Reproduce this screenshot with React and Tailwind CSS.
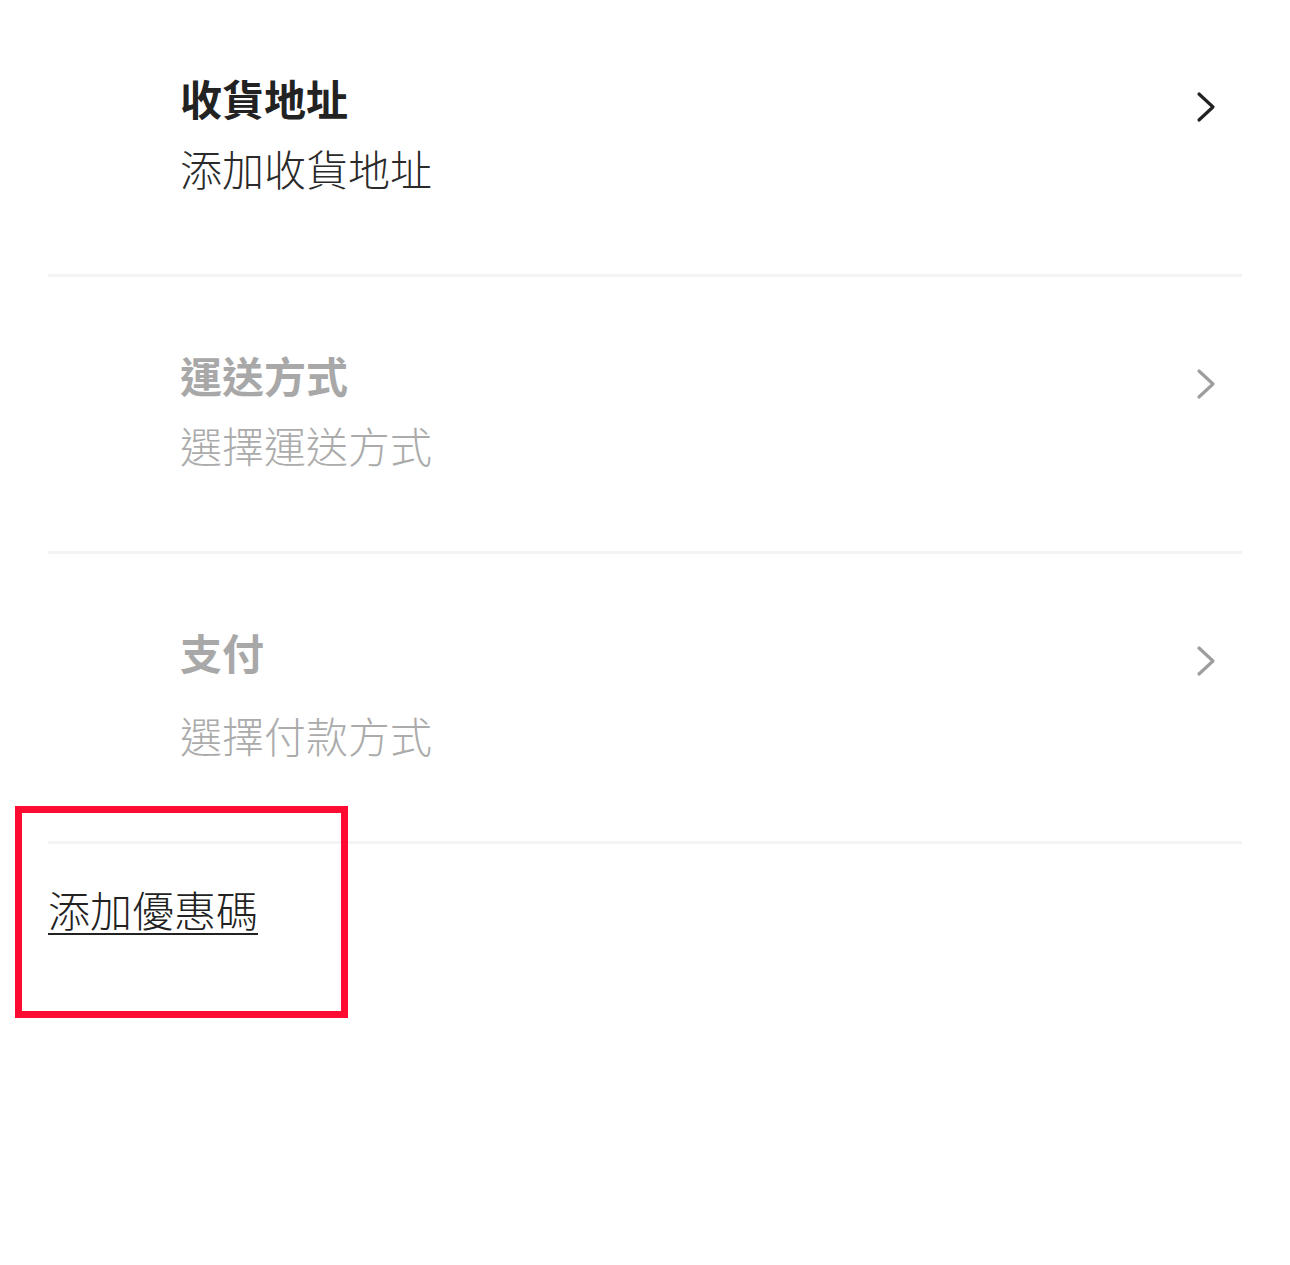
import React from "react";

const Chevron = ({ muted }) => (
    <svg width="22" height="34" viewBox="0 0 22 34" fill="none" className="shrink-0">
        <polyline
            points="4,4 18,17 4,30"
            stroke={muted ? "#9e9e9e" : "#222222"}
            strokeWidth="3.2"
            strokeLinecap="round"
            strokeLinejoin="round"
        />
    </svg>
);

const Section = ({ title, subtitle, muted, gap }) => (
    <div className="flex items-start pt-[63px] pb-[71px] pl-[132px] pr-[25px]">
        <div className="flex-1">
            <div
                className={`h-[70px] text-[42px] leading-[70px] font-bold ${
                    muted ? "text-[#a8a8a8]" : "text-[#222222]"
                }`}
            >
                {title}
            </div>
            <div
                className={`h-[70px] text-[42px] leading-[70px] font-light ${gap ? "mt-[13px]" : ""} ${
                    muted ? "text-[#ababab]" : "text-[#2a2a2a]"
                }`}
            >
                {subtitle}
            </div>
        </div>
        <div className="mt-[27px]">
            <Chevron muted={muted} />
        </div>
    </div>
);

const Divider = () => <div className="h-[3px] bg-[#f3f3f3]" />;

export default function App() {
    return (
        <div
            className="relative w-[1290px] h-[1265px] bg-white"
            style={{ fontFamily: '"Noto Sans CJK TC", "Noto Sans", sans-serif' }}
        >
            <div className="px-[48px]">
                <Section title="收貨地址" subtitle="添加收貨地址" />
                <Divider />
                <Section title="運送方式" subtitle="選擇運送方式" muted />
                <Divider />
                <Section title="支付" subtitle="選擇付款方式" muted gap />
                <Divider />
                <div className="pt-[30px]">
                    <span className="text-[42px] leading-[70px] font-light text-[#222222] underline decoration-2 underline-offset-[6px]">
                        添加優惠碼
                    </span>
                </div>
            </div>

            {/* highlight box */}
            <div className="absolute left-[15px] top-[806px] w-[333px] h-[212px] border-[7px] border-[#ff0a30]" />
        </div>
    );
}
